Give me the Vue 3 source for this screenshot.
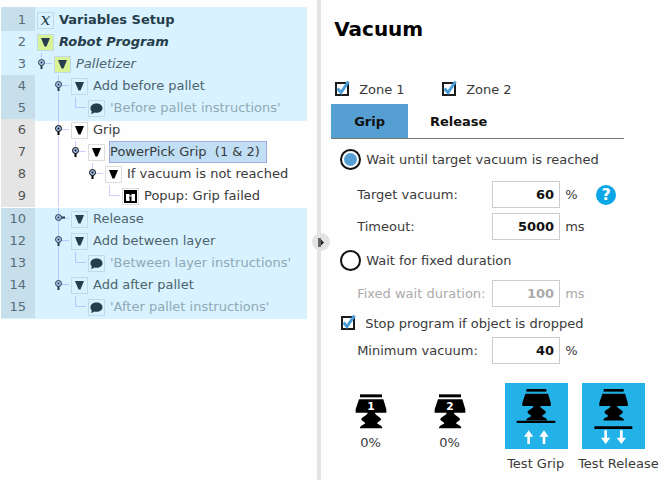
<template>
  <div class="app">
    <aside class="tree">
      <ul v-for="(group, g) in groups" :key="g" class="group" :class="{ dimmed: group.dimmed }">
        <li v-for="row in group.rows" :key="row.line" class="row">
          <span class="line" :class="{ plain: row.plain }">{{ row.line }}</span>
          <svg v-for="(guide, i) in row.guides" :key="i" class="guide" viewBox="0 0 17 22">
            <path v-if="guide === 'bar'" class="wire" d="M4.5 0V22" />
            <path v-if="guide === 'elbow'" class="wire" d="M4.5 0V10.5H15" />
            <path v-if="guide === 'end'" class="wire" d="M4.5 0V10M7 10.5H15" />
            <path v-if="guide === 'pin' || guide === 'side'" class="wire" d="M4.5 0V22M7 10.5H15" />
            <g v-if="guide === 'pin' || guide === 'end'">
              <path class="stem" d="M4.5 12V16" />
              <circle class="head" cx="4.5" cy="9.5" r="3" />
              <circle class="dot" cx="4.5" cy="9.5" r="1" />
            </g>
            <g v-if="guide === 'side'">
              <path class="stem" d="M7 9.5H11" />
              <circle class="head" cx="4.5" cy="9.5" r="3" />
              <circle class="dot" cx="4.5" cy="9.5" r="1" />
            </g>
          </svg>
          <span v-if="row.icon === 'var'" class="icon var">x</span>
          <svg v-else-if="row.icon === 'comment'" class="icon" viewBox="0 0 15 15">
            <path d="M7.5 2.5C11 2.5 13.5 4.5 13.5 7.2C13.5 9.8 11 11.8 7.5 11.8C6.8 11.8 6 11.7 5.4 11.5C4.5 12.3 3.2 12.8 1.6 12.7C2.4 12 2.8 11.2 2.8 10.4C1.9 9.5 1.5 8.4 1.5 7.2C1.5 4.5 4 2.5 7.5 2.5Z" />
          </svg>
          <svg v-else-if="row.icon === 'popup'" class="icon" viewBox="0 0 15 15">
            <path fill-rule="evenodd" d="M1 1H14V14H1ZM3 5V12H12V5Z" />
            <path d="M6.5 5H8.5V6.5H6.500ZM6 7.500H8.500V12H6.500V8.500H6Z" />
          </svg>
          <button v-else class="icon toggle" :class="{ green: row.green }" :aria-label="'Toggle ' + row.text">
            <svg viewBox="0 0 15 15"><path d="M3 3H12L8.5 11.5H6.5Z" /></svg>
          </button>
          <span class="text" :class="row.style">{{ row.text }}</span>
        </li>
      </ul>
    </aside>

    <div class="divider">
      <button class="handle" aria-label="Collapse">
        <svg viewBox="0 0 18 18">
          <path d="M6 5H9V14H6Z" fill="#666" />
          <path d="M9 6.5L12 9.5L9 12.5Z" fill="#222" />
        </svg>
      </button>
    </div>

    <main class="panel">
      <h1>Vacuum</h1>
      <div class="zones">
        <label v-for="zone in zones" :key="zone.id" class="check">
          <span class="box">
            <input type="checkbox" v-model="zone.on" />
            <svg viewBox="0 0 18 18"><path d="M4.5 8.5L8 12.5L15.5 1.5" /></svg>
          </span>
          Zone {{ zone.id }}
        </label>
      </div>

      <div class="tabs">
        <button v-for="name in ['Grip', 'Release']" :key="name" :class="{ active: tab === name }" @click="tab = name">{{ name }}</button>
      </div>

      <label class="radio">
        <input type="radio" value="target" v-model="mode" />
        Wait until target vacuum is reached
      </label>
      <div class="fields">
        <div class="field">
          <label for="target">Target vacuum:</label>
          <input id="target" type="text" v-model="target" />
          <span class="unit">%</span>
          <button class="help" aria-label="Help">?</button>
        </div>
        <div class="field">
          <label for="timeout">Timeout:</label>
          <input id="timeout" type="text" v-model="timeout" />
          <span class="unit">ms</span>
        </div>
      </div>

      <label class="radio">
        <input type="radio" value="fixed" v-model="mode" />
        Wait for fixed duration
      </label>
      <div class="fields tight">
        <div class="field" :class="{ disabled: mode !== 'fixed' }">
          <label for="duration">Fixed wait duration:</label>
          <input id="duration" type="text" v-model="duration" :disabled="mode !== 'fixed'" />
          <span class="unit">ms</span>
        </div>
      </div>

      <label class="check stop">
        <span class="box">
          <input type="checkbox" v-model="stop" />
          <svg viewBox="0 0 18 18"><path d="M4.5 8.5L8 12.5L15.5 1.5" /></svg>
        </span>
        Stop program if object is dropped
      </label>
      <div class="fields last">
        <div class="field">
          <label for="minimum">Minimum vacuum:</label>
          <input id="minimum" type="text" v-model="minimum" />
          <span class="unit">%</span>
        </div>
      </div>

      <div class="status">
        <div v-for="zone in zones" :key="zone.id" class="cup">
          <svg viewBox="0 0 96 105">
            <path d="M15 1H81V10H15Z" />
            <path :d="cup" />
            <text x="48" y="48" text-anchor="middle">{{ zone.id }}</text>
          </svg>
          <span>{{ zone.level }}%</span>
        </div>
        <button class="test">
          <svg viewBox="0 0 189 198">
            <path d="M64 18H124V26H64Z" />
            <path :d="cup" transform="translate(50 17) scale(0.93)" />
            <path d="M35 113H151V120H35Z" />
            <path class="arrow" d="M71 142L85 161H75V183H67V161H57ZM117 142L131 161H121V183H113V161H103Z" />
          </svg>
          <span>Test Grip</span>
        </button>
        <button class="test release">
          <svg viewBox="0 0 189 198">
            <path d="M65 18H125V26H65Z" />
            <path :d="cup" transform="translate(50 17) scale(0.93)" />
            <path d="M37 130H151V138H37Z" />
            <path class="arrow" d="M71 183L85 164H75V142H67V164H57ZM118 183L132 164H122V142H114V164H104Z" />
          </svg>
          <span>Test Release</span>
        </button>
      </div>
    </main>
  </div>
</template>

<script setup>
import { ref } from 'vue';

const groups = [
  {
    dimmed: true,
    rows: [
      { line: 1, guides: [], icon: 'var', text: 'Variables Setup', style: 'bold' },
      { line: 2, guides: [], green: true, plain: true, text: 'Robot Program', style: 'bold italic' },
      { line: 3, guides: ['end'], green: true, plain: true, text: 'Palletizer', style: 'italic' },
      { line: 4, guides: ['', 'pin'], text: 'Add before pallet' },
      { line: 5, guides: ['', 'bar', 'elbow'], icon: 'comment', text: "'Before pallet instructions'", style: 'comment' }
    ]
  },
  {
    dimmed: false,
    rows: [
      { line: 6, guides: ['', 'pin'], text: 'Grip' },
      { line: 7, guides: ['', 'bar', 'end'], text: 'PowerPick Grip  (1 & 2)', style: 'selected' },
      { line: 8, guides: ['', 'bar', '', 'end'], text: 'If vacuum is not reached' },
      { line: 9, guides: ['', 'bar', '', '', 'elbow'], icon: 'popup', text: 'Popup: Grip failed' }
    ]
  },
  {
    dimmed: true,
    rows: [
      { line: 10, guides: ['', 'side'], text: 'Release' },
      { line: 12, guides: ['', 'pin'], text: 'Add between layer' },
      { line: 13, guides: ['', 'bar', 'elbow'], icon: 'comment', text: "'Between layer instructions'", style: 'comment' },
      { line: 14, guides: ['', 'end'], text: 'Add after pallet' },
      { line: 15, guides: ['', '', 'elbow'], icon: 'comment', text: "'After pallet instructions'", style: 'comment' }
    ]
  }
];

// suction cup silhouette, shared by the zone icons and the test buttons
const cup = 'M12 16H85L94 46V56H60C60 64 76 68 78 75C78 82 68 82 66 88C70 93 82 94 82 103H15C15 94 27 93 31 88C29 82 19 82 19 75C21 68 38 64 38 56H2V46Z';

const zones = ref([
  { id: 1, on: true, level: 0 },
  { id: 2, on: true, level: 0 }
]);
const tab = ref('Grip');
const mode = ref('target');
const target = ref('60');
const timeout = ref('5000');
const duration = ref('100');
const stop = ref(true);
const minimum = ref('40');
</script>

<style>
body {
  margin: 0;
  background: #fefefe;
}
</style>

<style scoped>
* {
  box-sizing: border-box;
}

.app {
  display: grid;
  grid-template-columns: 10fr 4px 11fr;
  min-height: 100vh;
  font-family: 'DejaVu Sans', sans-serif;
  font-size: 13px;
  color: #3a3a3a;
}

button {
  padding: 0;
  border: none;
  background: none;
  font: inherit;
  color: inherit;
  cursor: pointer;
}

/* Program tree */
.tree {
  padding: 7px 10px 0 1px;
}

.group {
  margin: -2px 0 0;
  padding: 0 0 1px;
  list-style: none;
  --num: #e5e5e5;
  --edge: #dcdcdc;
  --ink: #000;
}

.group.dimmed {
  margin: 0;
  background: #d9f2ff;
  color: #4c646f;
  --num: #c7dfeb;
  --edge: #c2dae7;
  --ink: #263e4b;
}

.group.dimmed:first-child {
  padding: 2px 0;
  background: linear-gradient(90deg, #c7dfeb 34px, #d9f2ff 34px);
}

.row {
  display: flex;
  align-items: center;
  height: 22px;
}

.line {
  width: 34px;
  height: 22px;
  margin-right: 2px;
  padding-right: 9px;
  line-height: 22px;
  text-align: right;
  background: var(--num);
  color: #555;
}

.dimmed .line {
  color: #566d78;
}

.dimmed .line.plain {
  background: #d9f2ff;
}

.guide {
  width: 17px;
  height: 22px;
}

.wire {
  fill: none;
  stroke: rgba(120, 120, 255, 0.35);
}

.stem {
  stroke: var(--ink);
  stroke-width: 2;
}

.head {
  fill: #a9c4ee;
  stroke: var(--ink);
}

.dot {
  fill: var(--ink);
}

.icon {
  flex: none;
  width: 17px;
  height: 17px;
  border: 1px solid var(--edge);
  fill: var(--ink);
}

.toggle svg {
  display: block;
}

.icon.green {
  background: #d8f396;
}

.var {
  font-family: 'DejaVu Serif', serif;
  font-style: italic;
  font-size: 17px;
  line-height: 12px;
  text-align: center;
  color: var(--ink);
}

.text {
  margin-left: 4px;
  padding: 0 1px;
  line-height: 18px;
  white-space: pre;
}

.bold {
  font-weight: bold;
  color: #263e4b;
}

.italic {
  font-style: italic;
}

.comment {
  color: #8fa9b5;
}

.selected {
  padding: 0 6px 0 0;
  line-height: 20px;
  border: 1px solid #a5a9dc;
  background: #c0dff5;
}

/* Divider */
.divider {
  position: relative;
  background: #e3e3e3;
}

.handle {
  position: absolute;
  top: 50%;
  left: -5px;
  width: 18px;
  height: 18px;
  margin-top: -7px;
  border-radius: 50%;
  background: #e3e3e3;
}

.handle svg {
  display: block;
}

/* Settings */
.panel {
  padding: 16px 10px 0;
}

h1 {
  margin: 0 0 37px;
  padding-left: 3px;
  font-size: 20px;
  line-height: 26px;
  color: #000;
}

.zones {
  display: flex;
}

.zones .check {
  width: 107px;
}

.check {
  display: flex;
  align-items: center;
  gap: 8px;
  height: 20px;
  padding-left: 2px;
}

.box {
  display: grid;
}

.box input,
.box svg {
  grid-area: 1 / 1;
}

.box input {
  appearance: none;
  width: 14px;
  height: 14px;
  margin: 2px;
  border: 2px solid #1c1c1c;
  background: #fff;
}

.box svg {
  width: 18px;
  height: 18px;
  visibility: hidden;
  fill: none;
  stroke: #4a9fd8;
  stroke-width: 3;
  pointer-events: none;
}

.box input:checked + svg {
  visibility: visible;
}

.tabs {
  display: flex;
  width: 89%;
  margin: 5px 0 10px;
  border-bottom: 1px solid #777;
}

.tabs button {
  height: 34px;
  padding: 0 22px;
  font-weight: bold;
  color: #111;
}

.tabs .active {
  padding: 0 23px;
  background: #559fd3;
}

.radio {
  display: flex;
  align-items: center;
  gap: 5px;
  height: 21px;
  padding-left: 9px;
}

.radio input {
  appearance: none;
  width: 21px;
  height: 21px;
  margin: 0;
  border: 2px solid #111;
  border-radius: 50%;
  background: #fff;
}

.radio input:checked {
  padding: 2px;
  background: #559fd3 content-box;
}

.fields {
  display: grid;
  gap: 5px;
  margin: 11px 0 10px;
  padding-left: 26px;
}

.fields.tight {
  margin: 9px 0 6px;
}

.fields.last {
  margin: 4px 0 19px;
}

.field {
  display: flex;
  align-items: center;
}

.field label {
  width: 135px;
  white-space: nowrap;
}

.field input {
  width: 68px;
  height: 27px;
  padding: 0 5px;
  border: 1px solid #ccc;
  background: #fff;
  font: bold 13px 'DejaVu Sans', sans-serif;
  text-align: right;
  color: #111;
}

.unit {
  width: 36px;
  padding-left: 5px;
}

.disabled,
.disabled input {
  color: #aaa;
}

.help {
  width: 20px;
  height: 20px;
  border-radius: 50%;
  background: #0ba6e6;
  font-size: 16px;
  font-weight: bold;
  line-height: 20px;
  color: #fff;
}

.stop {
  padding-left: 8px;
}

/* Status and tests */
.status {
  display: flex;
}

.cup {
  display: flex;
  flex-direction: column;
  align-items: center;
  width: 79px;
  padding-top: 11px;
}

.cup svg {
  width: 32px;
  height: 35px;
}

.cup text {
  fill: #fff;
  font-size: 32px;
  font-weight: bold;
}

.cup span {
  line-height: 28px;
}

.test {
  display: flex;
  flex-direction: column;
  align-items: flex-start;
  margin-left: 16px;
  white-space: nowrap;
}

.test svg {
  width: 63px;
  height: 66px;
  background: #23b2e8;
}

.test span {
  padding: 0 2px;
  line-height: 30px;
}

.test .arrow {
  fill: #fff;
}

.release {
  margin-left: 10px;
}

.release svg {
  margin-left: 4px;
}

.release span {
  padding: 0;
}
</style>
